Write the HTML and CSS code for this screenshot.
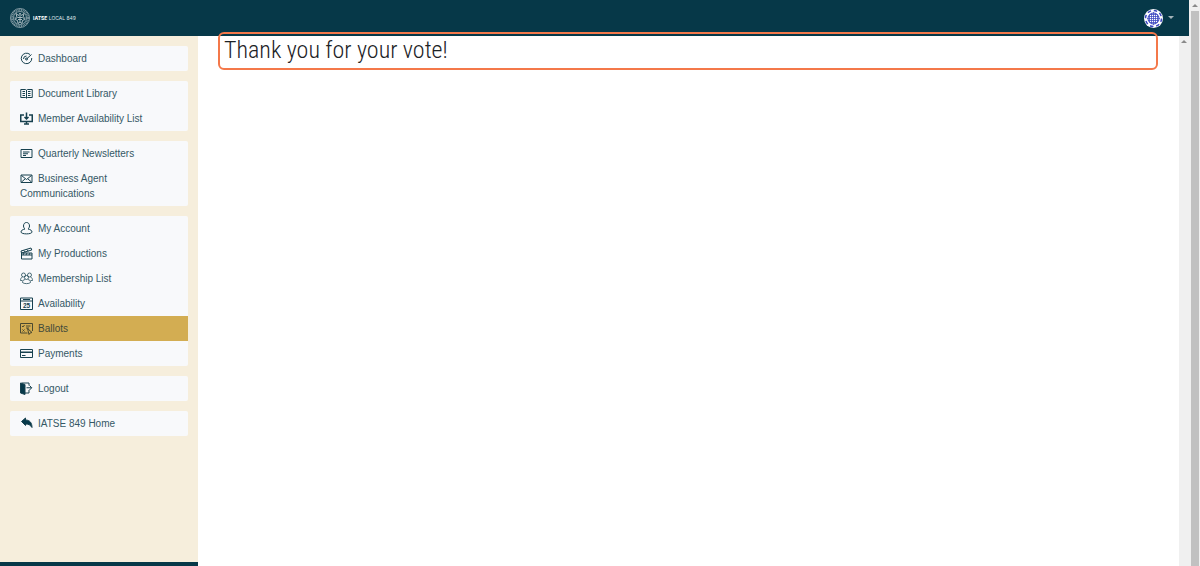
FILE: index.html
```html
<!DOCTYPE html>
<html lang="en">
  <head>
    <meta charset="UTF-8" />
    <meta name="viewport" content="width=device-width, initial-scale=1.0" />
    <title>IATSE Local 849 - Ballots</title>
    <link rel="stylesheet" href="styles.css">
  </head>
  <body>
    <div class="app">
      <header class="topbar">
        <a class="brand" href="#">
          <svg class="seal" viewBox="0 0 40 40" fill="none" stroke="#a9bac0">
            <circle cx="20" cy="20" r="19" stroke-width="1.5" />
            <circle cx="20" cy="20" r="16" stroke-width="4" stroke-dasharray="2 1.5" opacity=".7" />
            <circle cx="20" cy="20" r="13" stroke-width="1.5" />
            <path d="M12 11l5 4 3-5 3 5 5-4-2 8 4 4-5 2-1 6-4-3-4 3-1-6-5-2 4-4z" stroke-width="2" />
            <path d="M15 19h10M16 23h8M20 14v14M9 20h4M27 20h4" stroke-width="2" />
          </svg>
          <span><b>IATSE</b> LOCAL 849</span>
        </a>
        <button class="user" type="button" aria-label="User menu">
          <svg class="avatar" viewBox="0 0 38 38">
            <circle cx="19" cy="19" r="19" fill="#fff" />
            <g fill="none" stroke="#3b46c0">
              <circle cx="19" cy="19" r="16" stroke-width="3" stroke-dasharray="7 5.570" />
              <circle cx="19" cy="19" r="11" stroke-width="2" />
              <path d="M11 11v16M15 8v22M19 6v26M23 8v22M27 11v16M11 11h16M8 15h22M6 19h26M8 23h22M11 27h16" stroke-width="1.5" />
            </g>
          </svg>
          <span class="caret"></span>
        </button>
      </header>

      <div class="layout">
        <aside class="sidebar">
          <nav>
            <ul class="group">
              <li><a href="#"><svg class="icon" viewBox="0 0 26 26"><path d="M20 5A10.500 10.500 0 1 0 23.500 12" /><path d="M7 14a6 6 0 0 1 6-6M13 14L23 5" /><circle cx="13" cy="14" r="2" /></svg>Dashboard</a></li>
            </ul>
            <ul class="group">
              <li><a href="#"><svg class="icon" viewBox="0 0 26 26"><path d="M1.500 5H11l2 1.500L15 5h9.500v16H15l-2 1.500L11 21H1.500zM13 6v16M5 9h5M5 13h5M5 17h5M16 9h5M16 13h5M16 17h5" /></svg>Document Library</a></li>
              <li><a href="#"><svg class="icon bold" viewBox="0 0 26 26"><path d="M8 6H1.500v13h23V6H18M13 1v12M9 10l4 4 4-4M13 19v4M8 24h10" /></svg>Member Availability List</a></li>
            </ul>
            <ul class="group">
              <li><a href="#"><svg class="icon" viewBox="0 0 26 26"><path d="M2 5h22v16H2zM6 10h13M6 13.500h10M6 17h6" /></svg>Quarterly Newsletters</a></li>
              <li><a href="#"><svg class="icon" viewBox="0 0 26 26"><path d="M2 6h22v15H2zM3 7l10 8 10-8M3 20l7-6M23 20l-7-6" /></svg>Business Agent Communications</a></li>
            </ul>
            <ul class="group">
              <li><a href="#"><svg class="icon" viewBox="0 0 26 26"><path d="M13 1c-4 0-6 3-6 7 0 3 2 5 3 6-5 1-8 3-8 6 0 5 22 5 22 0 0-3-3-5-8-6 1-1 3-3 3-6 0-4-2-7-6-7z" /></svg>My Account</a></li>
              <li><a href="#"><svg class="icon" viewBox="0 0 26 26"><path d="M3 12h21v12H3zM2 8L22 2l1.500 4L3 12zM3 16h21M7 7l4 3M13 5l4 3M8 12l-2 4M14 12l-2 4M20 12l-2 4" /></svg>My Productions</a></li>
              <li><a href="#"><svg class="icon thin" viewBox="0 0 26 26"><circle cx="13" cy="11" r="4" /><circle cx="7" cy="6" r="4" /><circle cx="19" cy="6" r="4" /><path d="M10 15c-4 1-5 3-5 6 3 3 13 3 16 0 0-3-1-5-5-6M5 10c-3 1-4 4-4 7h4M21 10c3 1 4 4 4 7h-4" /></svg>Membership List</a></li>
              <li><a href="#"><svg class="icon" viewBox="0 0 26 26"><path d="M1 2h24v23H1zM1 8h24M6 5h14" /><text x="13" y="21" text-anchor="middle">25</text></svg>Availability</a></li>
              <li><a class="active" href="#"><svg class="icon" viewBox="0 0 26 26"><path d="M15 22H1V3h24v15M4 8l2 2 3-4M12 8h9M12 12h6M5 15l4 4M9 15l-4 4M15 13l9 8-4 1-2 3z" /></svg>Ballots</a></li>
              <li><a href="#"><svg class="icon" viewBox="0 0 26 26"><path d="M1 5h24v16H1zM4 17h7" /><path class="bold" d="M2 10.500h22" /></svg>Payments</a></li>
            </ul>
            <ul class="group">
              <li><a href="#"><svg class="icon" viewBox="0 0 26 26"><path class="solid" d="M1 2l9 3v20l-9-3z" /><path d="M3 2h15v5M18 16v6h-8M13 11.500h10M19 7l4.500 4.500L19 16" /></svg>Logout</a></li>
            </ul>
            <ul class="group">
              <li><a href="#"><svg class="icon" viewBox="0 0 26 26"><path class="solid" d="M3 9l8-7v4c9 0 13 6 13 15-3-5-7-7-13-7v3z" /></svg>IATSE 849 Home</a></li>
            </ul>
          </nav>
          <div class="sidebar-foot"></div>
        </aside>
        <main class="content">
          <h1>Thank you for your vote!</h1>
        </main>
        <div class="scroll inner"><span class="arrow"></span></div>
      </div>
    </div>
    <div class="scroll outer"><span class="arrow"></span><span class="thumb"></span></div>
  </body>
</html>
```

FILE: styles.css
```css
* {
  box-sizing: border-box;
  margin: 0;
  padding: 0;
}

body {
  display: flex;
  min-height: 100vh;
  font-family: "Liberation Sans", Arial, sans-serif;
  font-size: 10px;
  line-height: 15px;
  color: #06394a;
  background-color: #fff;
}

.app {
  flex: 1;
  display: flex;
  flex-direction: column;
}

/* top bar */
.topbar {
  display: flex;
  align-items: center;
  justify-content: space-between;
  height: 36px;
  padding: 0 15px 0 10px;
  background-color: #063848;
}

.brand {
  display: flex;
  align-items: center;
  gap: 3px;
  color: #dfe6e8;
  font-family: "Inter", sans-serif;
  font-size: 5px;
  text-decoration: none;
}

.brand b {
  color: #fff;
}

.seal {
  width: 20px;
  height: 20px;
}

.user {
  display: flex;
  align-items: center;
  gap: 5px;
  border: none;
  background: none;
  cursor: pointer;
}

.avatar {
  width: 19px;
  height: 19px;
}

.caret {
  margin-bottom: 2px;
  border-top: 3px solid #a3b3b9;
  border-left: 3px solid transparent;
  border-right: 3px solid transparent;
}

.layout {
  flex: 1;
  display: flex;
}

/* sidebar */
.sidebar {
  display: flex;
  flex-direction: column;
  justify-content: space-between;
  width: 198px;
  background-color: #f6eedc;
}

nav {
  display: flex;
  flex-direction: column;
  gap: 10px;
  padding: 10px;
}

.group {
  list-style: none;
  background-color: #f8f9fb;
  border-radius: 2px;
}

.group a {
  display: block;
  padding: 5px 10px;
  color: #355865;
  text-decoration: none;
}

.group a.active {
  background-color: #d3ad52;
  color: #3f4a3b;
}

.icon {
  width: 13px;
  height: 13px;
  margin-right: 5px;
  vertical-align: -3px;
  fill: none;
  stroke: #17414f;
  stroke-width: 2;
}

.icon text {
  fill: #17414f;
  stroke: none;
  font-size: 13px;
  font-weight: bold;
}

.active .icon {
  stroke: #4b4a30;
}

.thin {
  stroke-width: 1.5;
}

.bold {
  stroke-width: 3;
}

.solid {
  fill: #06394a;
}

.sidebar-foot {
  height: 4px;
  background-color: #063848;
}

/* content */
.content {
  flex: 1;
  padding: 0 21px 0 20px;
}

h1 {
  position: relative;
  margin-top: -4px;
  padding: 1px 4px 3px;
  border: 2px solid #f4784a;
  border-radius: 6px;
  color: #1c2226;
  font-family: "Roboto Condensed", "Roboto", sans-serif;
  font-size: 24px;
  font-weight: 300;
  line-height: 30px;
}

/* scrollbars */
.scroll {
  display: flex;
  flex-direction: column;
  align-items: center;
  width: 10px;
  background-color: #f0f0f0;
}

.outer {
  width: 11px;
}

.arrow {
  margin: 4px 0;
  border-bottom: 3px solid #8a8a8a;
  border-left: 3px solid transparent;
  border-right: 3px solid transparent;
}

.thumb {
  flex: 1;
  width: 8px;
  background-color: #c1c1c1;
}
```
